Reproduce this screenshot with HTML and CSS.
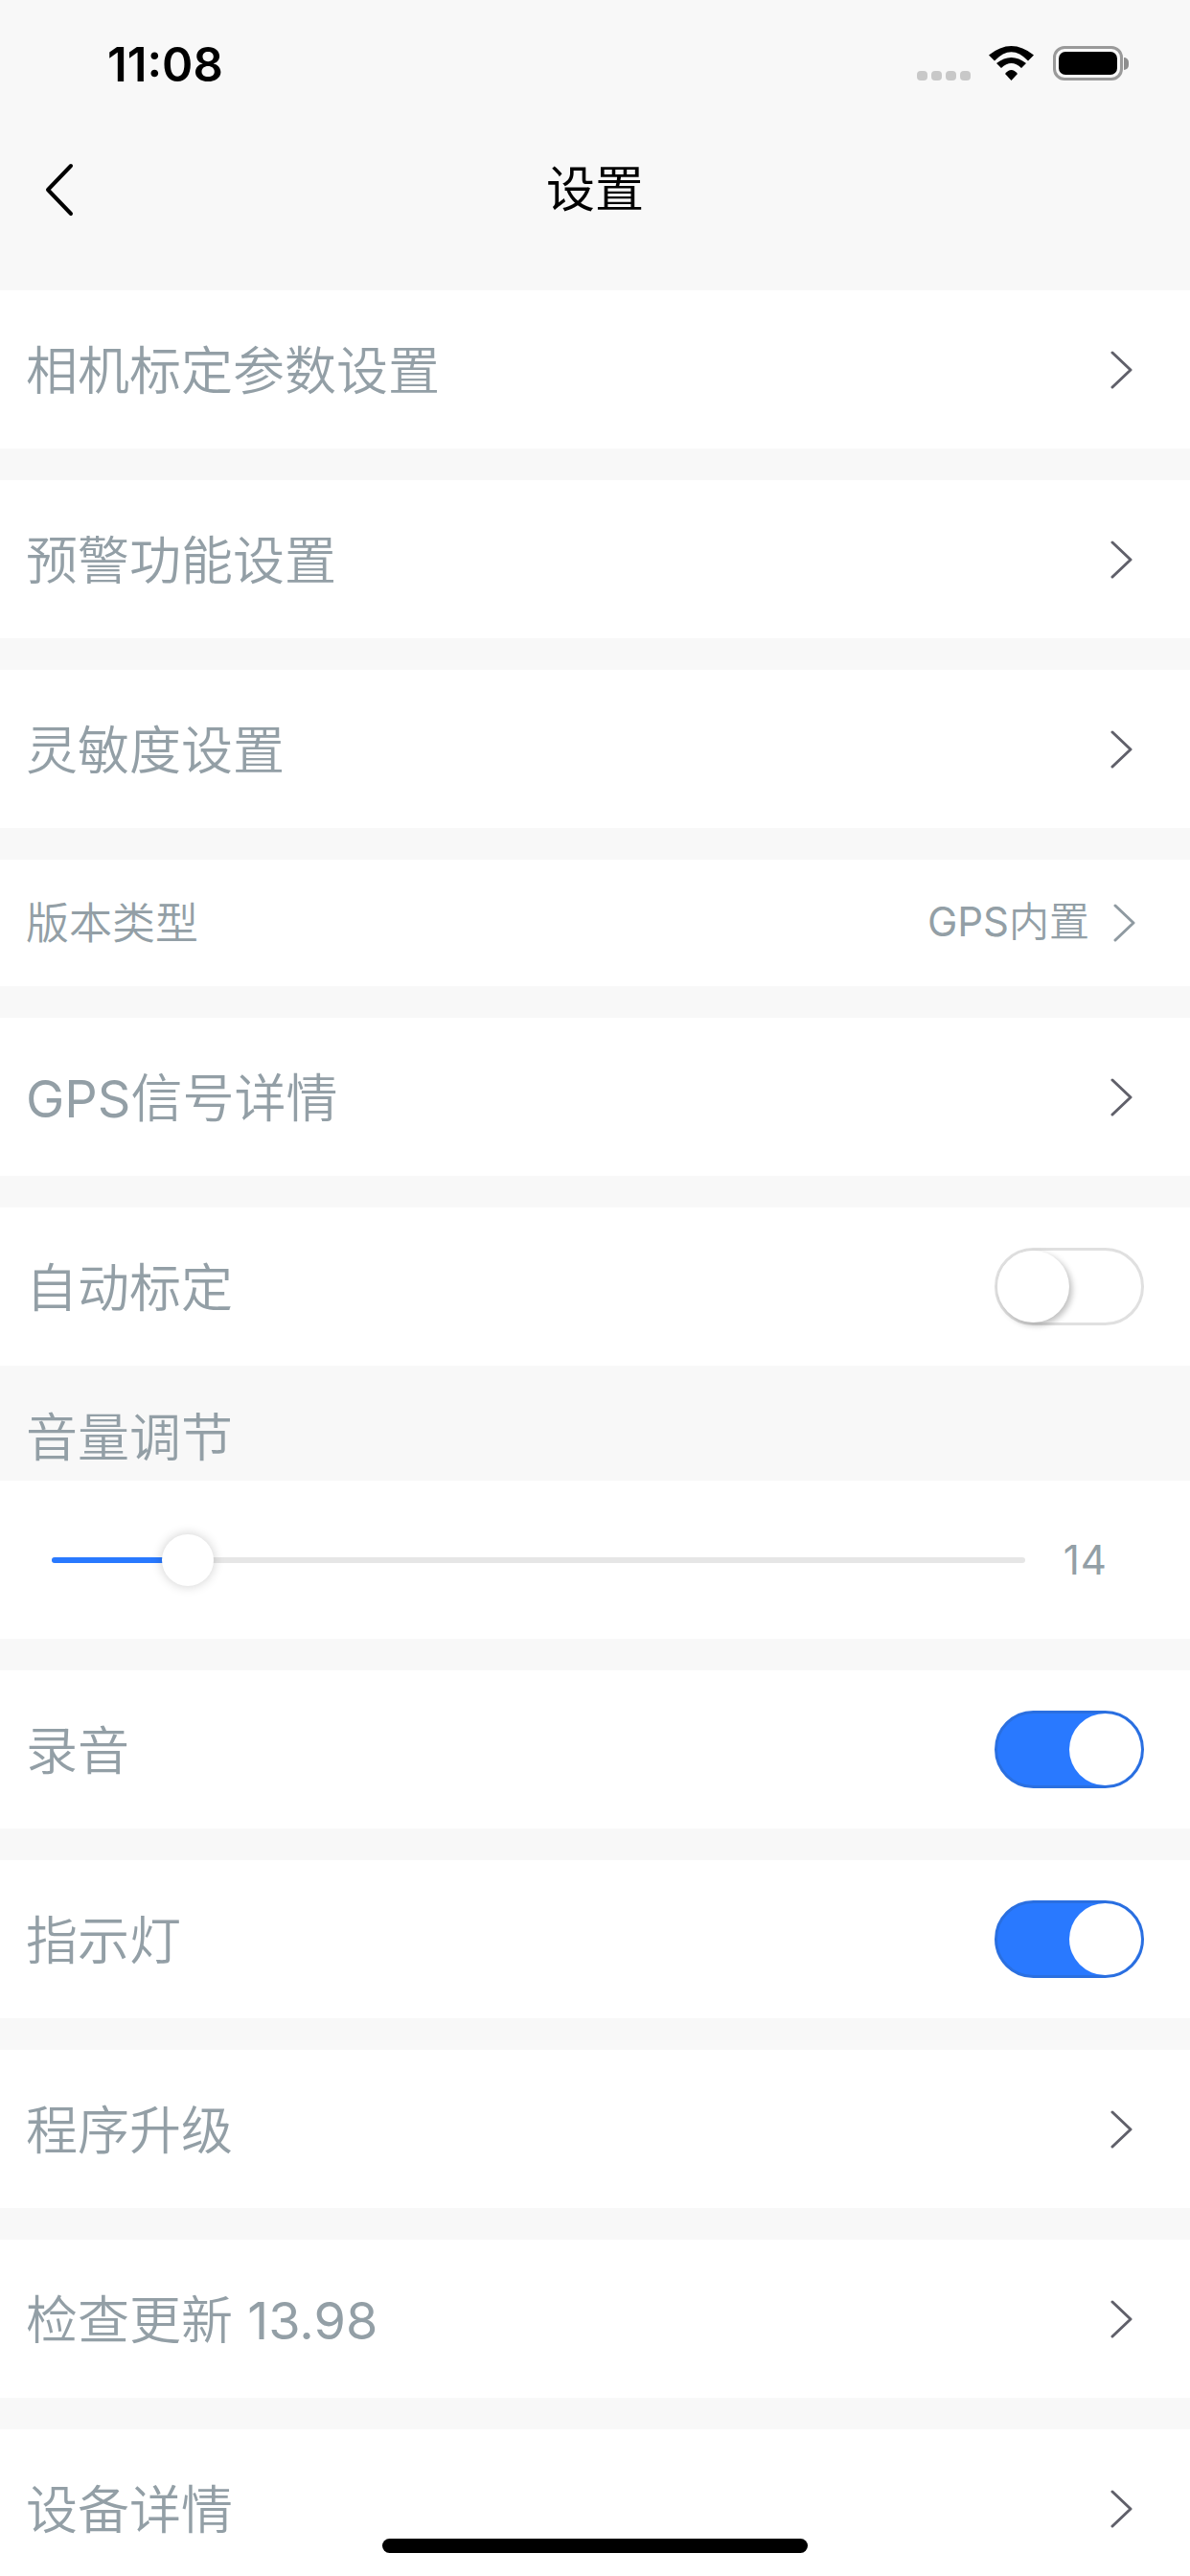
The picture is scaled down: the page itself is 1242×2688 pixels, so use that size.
FILE: index.html
```html
<!DOCTYPE html>
<html lang="zh-CN">
<head>
<meta charset="utf-8">
<title>设置</title>
<link rel="stylesheet" href="styles.css">
</head>
<body>
<div class="screen">
  <header class="header">
    <div class="status">
      <span class="time">11:08</span>
      <div class="status-icons">
        <div class="signal"><i></i><i></i><i></i><i></i></div>
        <svg class="wifi" width="47" height="36" viewBox="0 0 47 36"><path d="M0 9.5Q23.5-9.5 47 9.5L41 15.5Q23.5-3 6 15.5Z"/><path d="M8 18Q23.5 6 39 18L34 23Q23.5 13 13 23Z"/><path d="M17 29Q23.5 21 30 29L23.5 36Z"/></svg>
        <div class="battery"><div class="battery-body"><div class="battery-level"></div></div><div class="battery-nub"></div></div>
      </div>
    </div>
    <nav class="nav">
      <svg class="back" width="32" height="56" viewBox="0 0 32 56"><path d="M28 3L4 28L28 53"/></svg>
      <h1 class="title">设置</h1>
    </nav>
  </header>

  <main class="list">
    <div class="row"><span class="label">相机标定参数设置</span><svg class="chev" width="24" height="40" viewBox="0 0 24 40"><path d="M2 2L21 20L2 38"/></svg></div>
    <div class="row"><span class="label">预警功能设置</span><svg class="chev" width="24" height="40" viewBox="0 0 24 40"><path d="M2 2L21 20L2 38"/></svg></div>
    <div class="row"><span class="label">灵敏度设置</span><svg class="chev" width="24" height="40" viewBox="0 0 24 40"><path d="M2 2L21 20L2 38"/></svg></div>
    <div class="row row-short">
      <span class="label label-small">版本类型</span>
      <div class="row-end"><span class="value"><span class="latin">GPS</span>内置</span><svg class="chev chev-light" width="24" height="40" viewBox="0 0 24 40"><path d="M2 2L21 20L2 38"/></svg></div>
    </div>
    <div class="row"><span class="label"><span class="latin">GPS</span>信号详情</span><svg class="chev" width="24" height="40" viewBox="0 0 24 40"><path d="M2 2L21 20L2 38"/></svg></div>
    <div class="row row-tail"><span class="label">自动标定</span><div class="switch"><span class="knob"></span></div></div>
    <div class="section-title">音量调节</div>
    <div class="row row-slider">
      <div class="slider"><div class="fill"></div><div class="thumb"></div></div>
      <span class="slider-value">14</span>
    </div>
    <div class="row"><span class="label">录音</span><div class="switch switch-on"><span class="knob"></span></div></div>
    <div class="row"><span class="label">指示灯</span><div class="switch switch-on"><span class="knob"></span></div></div>
    <div class="row"><span class="label">程序升级</span><svg class="chev" width="24" height="40" viewBox="0 0 24 40"><path d="M2 2L21 20L2 38"/></svg></div>
    <div class="row"><span class="label">检查更新 <span class="latin">13.98</span></span><svg class="chev" width="24" height="40" viewBox="0 0 24 40"><path d="M2 2L21 20L2 38"/></svg></div>
    <div class="row"><span class="label">设备详情</span><svg class="chev" width="24" height="40" viewBox="0 0 24 40"><path d="M2 2L21 20L2 38"/></svg></div>
  </main>
  <div class="home-bar"></div>
</div>
</body>
</html>
```

FILE: styles.css
```css
* { box-sizing: border-box; margin: 0; padding: 0; }
html, body { width: 1242px; height: 2688px; overflow: hidden; background: #f8f8f8; }
body { font-family: Inter, "Noto Sans CJK SC", "Noto Sans", sans-serif; }
.screen { position: relative; width: 1242px; height: 2688px; overflow: hidden; }

.header { height: 303px; display: flex; flex-direction: column; }
.status { height: 132px; display: flex; align-items: center; justify-content: space-between; padding: 0 64px 0 112px; }
.time { font-family: Inter, sans-serif; font-weight: 600; font-size: 49px; line-height: 1; color: #000; margin-top: 2px; }
.status-icons { display: flex; align-items: flex-end; height: 36px; }
.signal { display: flex; gap: 4px; margin-right: 19px; }
.signal i { display: block; width: 11px; height: 10px; border-radius: 4px; background: #c8c8c8; }
.wifi { fill: #000; margin-right: 20px; display: block; }
.battery { display: flex; align-items: center; height: 36px; }
.battery-body { width: 73px; height: 36px; border: 3px solid #9a9a9a; border-radius: 12px; padding: 3px; }
.battery-level { width: 100%; height: 100%; background: #000; border-radius: 7px; }
.battery-nub { width: 5px; height: 13px; margin-left: 1px; background: #8e8e8e; border-radius: 0 5px 5px 0; }

.nav { height: 132px; position: relative; display: flex; align-items: center; justify-content: center; }
.back { position: absolute; left: 46px; top: 38px; fill: none; stroke: #000; stroke-width: 4; stroke-linecap: round; stroke-linejoin: round; }
.title { font-size: 51px; font-weight: 400; line-height: 1; color: #000; margin-bottom: 1px; }

.list { display: flex; flex-direction: column; }
.row { height: 165px; flex: none; margin-bottom: 33px; background: #fff; display: flex; align-items: center; justify-content: space-between; padding: 0 48px 0 27px; }
.row-short { height: 132px; padding-right: 45px; }
.row-tail { margin-bottom: 0; }
.label { font-size: 54px; font-weight: 350; line-height: 1; color: #939fa6; margin-top: 4px; }
.label-small { font-size: 45px; margin-top: 0; }
.latin { font-weight: 400; }
.row-end { display: flex; align-items: center; gap: 25px; }
.value { font-size: 42px; font-weight: 350; line-height: 1; color: #939fa6; margin-bottom: 2px; }
.chev { display: block; fill: none; stroke: #60606a; stroke-width: 3; stroke-linecap: round; stroke-linejoin: round; margin-right: 11px; }
.chev-light { stroke: #8f9aa1; margin-right: 11px; }

.section-title { height: 120px; flex: none; display: flex; align-items: center; padding-left: 27px; padding-top: 31px; font-size: 54px; font-weight: 350; line-height: 1; color: #939fa6; }

.row-slider { padding: 0 86px 0 54px; justify-content: flex-start; }
.slider { position: relative; width: 1016px; height: 6px; background: #e6e6e6; border-radius: 3px; }
.fill { width: 120px; height: 6px; background: #2979ff; border-radius: 3px; }
.thumb { position: absolute; left: 115px; top: -24px; width: 54px; height: 54px; border-radius: 50%; background: #fff; box-shadow: 0 0 12px rgba(0, 0, 0, .2); }
.slider-value { margin-left: auto; font-size: 42px; font-weight: 400; letter-spacing: 1px; line-height: 1; color: #939fa6; }

.switch { width: 156px; height: 81px; border: 3px solid #e0e0e0; border-radius: 41px; background: #fff; display: flex; justify-content: flex-start; }
.knob { display: block; width: 75px; height: 75px; border-radius: 50%; background: #fff; box-shadow: 3px 3px 6px rgba(0, 0, 0, .25); }
.switch-on { justify-content: flex-end; background: #2979ff; border-color: #2a6fe0; }
.switch-on .knob { box-shadow: none; }

.home-bar { position: absolute; left: 399px; top: 2649px; width: 444px; height: 15px; border-radius: 8px; background: #000; }
```
